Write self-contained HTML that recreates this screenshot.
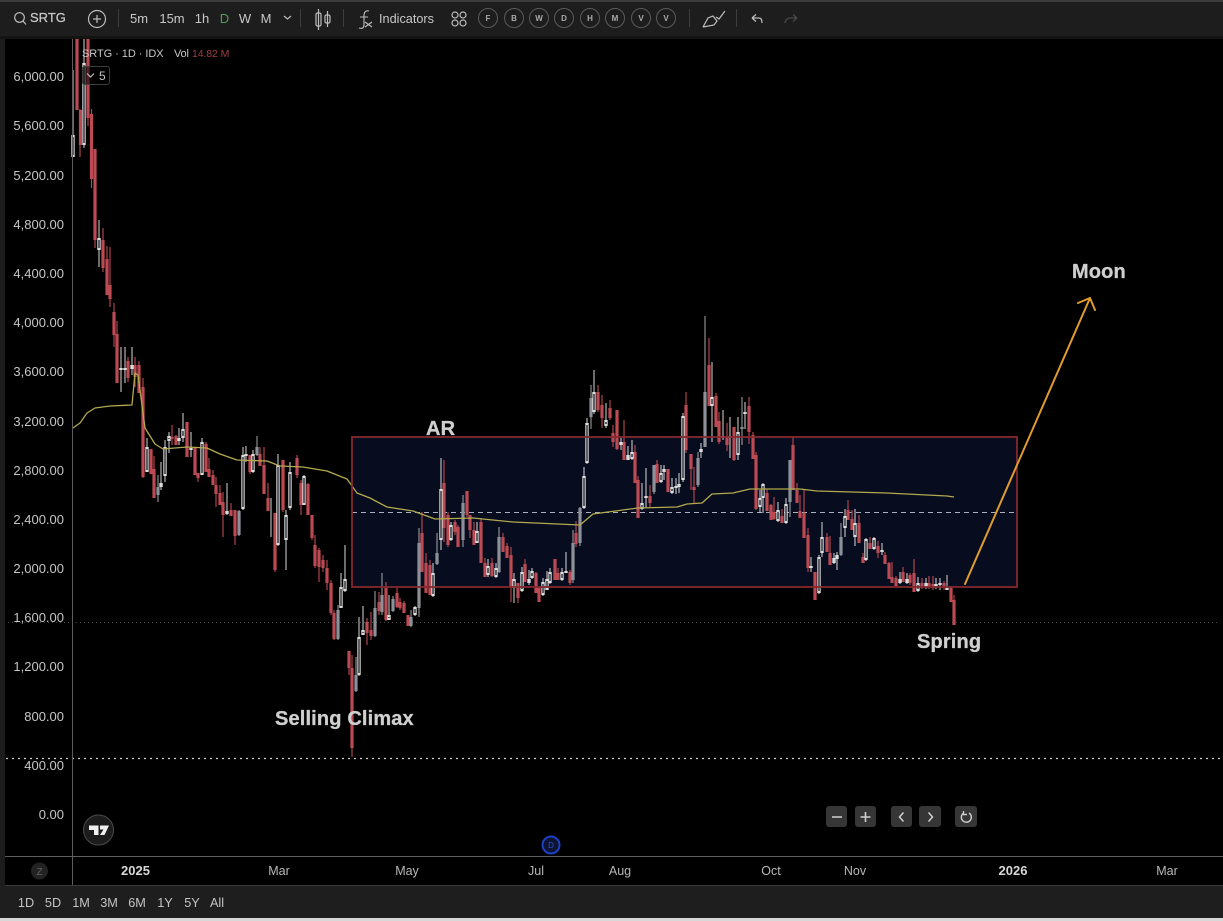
<!DOCTYPE html>
<html><head><meta charset="utf-8"><style>
html,body{margin:0;padding:0;background:#000;width:1223px;height:921px;overflow:hidden}
svg{display:block;font-family:"Liberation Sans",sans-serif}
.y text{font-size:13px;fill:#c6c6c6;text-anchor:end}
.t text{font-size:12.5px;fill:#b8b8b8;text-anchor:middle}
.tb text{font-size:13px;fill:#c8c8c8;text-anchor:middle}
.r text{font-size:12.7px;fill:#c4c4c4;text-anchor:middle}
.c circle{fill:none;stroke:#5a5a5a}
.c text{font-size:8px;font-weight:bold;fill:#aaa;text-anchor:middle}
.a{font-size:20px;font-weight:bold;fill:#cfcfcf;stroke:#cfcfcf;stroke-width:.3;letter-spacing:.15px}
.ic{fill:none;stroke:#bdbdbd;stroke-width:1.2}
</style></head><body>
<svg width="1223" height="921" viewBox="0 0 1223 921" xmlns="http://www.w3.org/2000/svg">
<rect width="1223" height="921" fill="#000"/>
<rect x="352" y="437" width="665" height="150" fill="#070d1f"/>
<path d="M0 622.5H1218" stroke="#444" stroke-dasharray="1 3" fill="none"/>
<path d="M352 512.5H1017" stroke="#aab0bc" stroke-width="1.1" stroke-dasharray="5 4" fill="none"/>

<!-- red wicks -->
<path fill="none" stroke="#bd4a52" stroke-width="1.1" d="M80 109V157M88 39V126M91.500 109V188M95 149V248M103 228V272M107 246V295M110 247V307M114 303V347M117 321V383M128 357V382M135 357V387M139 361V393M143 378V478M154 456V498M172 425V445M176 435V445M198 473V482M206 442V472M209 458V477M213 470V485M216 477V507M220 485V505M223 492V537M231 503V516M235 510V545M250 455V474M260 447V466M264 447V494M268 483V511M275 513V572M283 460V512M297 455V478M301 480V515M308 483V515M312 515V540M315 535V568M319 548V582M323 555V572M327 560V590M331 580V615M334 610V640M349 651V675M352 655V757M367 618V645M371 612V640M379 592V615M386 582V621M397 588V608M400 598V610M404 601V613M422 512V572M426 553V593M430 560V595M444 460V542M448 512V547M455 520V535M458 525V547M467 491V517M470 515V538M474 522V545M481 518V563M485 558V577M492 558V577M503 533V552M507 543V558M511 547V602M518 583V603M525 559V582M536 572V593M539 587V602M555 559V580M558 568V580M570 570V585M576 521V547M598 385V412M602 395V428M610 400V420M613 425V447M617 410V450M624 420V460M635 445V483M638 476V518M650 485V508M657 460V483M668 469V492M686 392V453M691 454V490M694 467V503M709 338V406M716 393V427M719 412V444M727 423V451M734 427V461M749 397V444M753 432V459M756 452V510M767 489V511M771 504V520M774 497V520M782 509V523M793 437V490M797 483V503M800 495V518M804 490V538M808 528V572M815 572V600M827 533V552M830 536V565M848 500V520M852 510V530M859 515V543M863 553V563M870 537V549M878 541V558M885 552V564M889 562V579M892 562V583M896 576V586M903 567V582M910 573V585M914 559V592M922 578V589M929 576V589M933 576V590M944 581V590M951 586V602M954 595V625"/>
<!-- red bodies -->
<path fill="none" stroke="#bb4a52" stroke-width="3.2" d="M77 39V110M80.500 110V145M88 39V118M91.500 114V179M95 149V240M103 240V268M107 259V295M110 285V299M114 312V335M117 334V383M128 361V378M135 365V377M139 365V393M143 387V477M151 449V474M154 469V498M172 437V439M176 436V445M187 422V457M195 447V475M198 473V478M206 444V472M209 469V477M213 475V485M216 485V494M220 493V505M223 502V515M231 510V516M235 510V536M250 455V472M260 454V466M264 465V494M268 498V511M275 513V570M283 460V510M297 458V475M301 483V505M308 484V515M312 515V538M315 545V566M319 550V567M323 560V568M327 568V583M331 583V613M334 613V639M349 651V668M352 668V748M367 622V633M371 630V636M379 602V611M386 587V620M397 593V607M400 602V608M404 603V613M408 615V626M422 533V572M426 563V593M430 565V595M444 483V528M448 515V545M455 522V532M458 527V547M467 491V515M470 515V530M474 530V545M481 522V563M485 563V577M492 563V576M503 537V552M507 546V558M511 555V587M518 583V598M525 564V582M536 573V593M539 588V602M555 559V580M558 573V580M570 572V583M576 533V544M598 392V410M602 405V418M610 408V418M613 433V442M617 410V449M624 442V460M635 452V483M638 480V518M650 496V503M657 464V483M668 469V492M686 405V450M691 454V469M694 487V490M709 365V406M716 396V427M719 421V442M727 437V445M734 427V460M749 406V432M753 435V459M756 455V509M767 493V511M771 505V520M774 512V519M782 516V523M793 445V490M797 490V503M800 511V518M804 513V538M808 535V568M815 572V600M827 537V552M830 553V565M848 510V520M852 519V530M859 523V543M863 557V563M870 543V549M878 546V553M885 555V564M889 563V579M892 577V583M896 578V586M903 572V582M910 575V583M914 573V592M922 583V587M929 583V587M933 584V587M944 583V588M951 587V602M954 600V625"/>
<path fill="none" stroke="#a8a8a8" stroke-width="1" d="M158 475V502M239 510V536M257 436V456M338 605V640M356 657V692M375 591V637M393 596V612M411 610V627M419 528V617M437 533V565M463 495V547M499 527V573M573 530V583M580 507V546M591 385V429M654 465V494M698 452V487M705 316V447M742 397V445M790 460V517M841 523V556M382 573V615"/>
<path fill="none" stroke="#8d9098" stroke-width="3.2" d="M158 487V495M239 511V535M257 447V455M338 610V639M356 675V691M375 608V636M393 599V611M411 617V626M419 543V608M437 553V564M463 503V540M499 537V572M573 543V580M580 508V543M591 398V417M654 465V492M698 458V485M705 392V447M742 427V429M790 460V502M841 537V555M382 595V612"/>
<!-- white wicks -->
<path fill="none" stroke="#d8d8d8" stroke-width="1" d="M73 70V157M84 39V148M99 220V267M121 347V392M125 347V383M132 347V375M147 438V472M161 462V490M165 440V482M169 432V453M179 428V445M183 413V442M191 432V457M202 438V475M227 483V515M243 447V510M246 446V462M253 450V473M271 498V537M278 454V546M286 510V570M290 462V510M304 475V505M341 573V608M345 545V592M359 617V676M363 606V635M389 595V620M415 606V616M433 563V597M441 458V550M451 522V541M477 522V543M488 559V577M496 563V578M514 573V603M522 567V592M529 570V585M532 568V579M543 578V596M547 571V590M550 568V584M562 568V581M566 552V573M584 467V509M587 418V464M594 370V414M606 403V428M621 438V450M628 446V460M632 440V460M642 483V510M646 468V508M661 465V483M664 465V480M672 478V494M676 478V494M679 473V493M683 413V482M701 443V458M712 362V442M723 410V440M730 417V458M738 417V460M745 402V429M760 490V513M763 483V513M778 502V522M786 498V524M811 557V572M819 555V594M822 522V557M834 553V564M837 552V570M845 509V537M855 509V546M866 538V561M874 537V550M882 543V555M900 572V584M907 573V584M918 577V592M926 578V589M936 578V589M940 578V590M947 575V590"/>
<!-- white bodies: outer then inner -->
<path fill="none" stroke="#dcdcdc" stroke-width="3.4" d="M73 135V157M84 63V145M99 238V250M121 368V370M125 368V370M132 365V369M147 447V472M161 483V487M165 447V476M169 436V441M179 438V441M183 429V438M191 448V450M202 442V475M227 511V514M243 455V509M246 454V456M253 454V472M278 465V545M286 515V540M290 472V508M304 476V505M341 587V608M345 579V591M359 637V675M363 630V635M389 615V620M415 607V615M433 573V596M441 489V540M451 525V540M477 531V543M488 566V575M496 568V577M514 579V588M522 572V591M529 579V583M532 571V578M543 582V595M547 579V590M550 572V583M562 572V580M566 571V573M584 476V508M587 423V463M594 392V412M606 420V426M621 442V445M628 455V460M632 452V459M642 503V509M646 496V498M661 473V482M664 469V472M672 487V493M676 486V488M679 484V487M683 416V480M701 449V452M712 397V406M723 436V438M730 436V438M738 432V455M745 412V414M760 498V507M763 484V498M778 510V521M786 504V523M811 566V568M819 557V593M822 537V553M834 558V563M837 555V559M845 516V528M855 523V537M866 539V560M874 538V549M882 550V552M900 579V583M907 579V583M918 583V591M926 583V587M936 584V586M940 583V585M947 588V590"/>
<path fill="none" stroke="#2a2c32" stroke-width="1.4" d="M73 137V155M84 65V143M99 240V248M147 449V470M165 449V474M169 438V439M183 431V436M202 444V473M243 457V507M253 456V470M278 467V543M286 517V538M290 474V506M304 478V503M341 589V606M345 581V589M359 639V673M363 632V633M389 617V618M415 609V613M433 575V594M441 491V538M451 527V538M477 533V541M488 568V573M496 570V575M514 581V586M522 574V589M532 573V576M543 584V593M547 581V588M550 574V581M562 574V578M584 478V506M587 425V461M594 394V410M606 422V424M632 454V457M642 505V507M661 475V480M672 489V491M683 418V478M712 399V404M738 434V453M760 500V505M763 486V496M778 512V519M786 506V521M819 559V591M822 539V551M845 518V526M855 525V535M866 541V558M874 540V547M918 585V589"/>

<path fill="none" stroke="#b3a94e" stroke-width="1.3" stroke-linejoin="round" d="M73 428L80 423L87 413L95 408L110 406L132 405L135 373L138 375L145 428L155 444L163 449L187 447L207 448L220 454L237 460L267 461L280 466L303 467L327 471L347 479L357 493L370 498L387 507L413 511L435 519L473 518L513 522L580 525L593 514L638 508L677 507L687 504L702 503L712 494L733 493L750 489L800 489L817 491L887 493L947 496L954 497"/>
<rect x="352" y="437" width="665" height="150" fill="none" stroke="#84292f" stroke-width="1.8"/>

<path fill="none" stroke="#e09c2c" stroke-width="2" stroke-linecap="round" stroke-linejoin="round" d="M965 584L1090 298M1078 303L1090 298L1095 310"/>

<text class="a" x="1072" y="278">Moon</text>
<text class="a" x="426" y="435">AR</text>
<text class="a" x="917" y="648">Spring</text>
<text class="a" x="275" y="725">Selling Climax</text>

<path d="M0 758.5H1223" stroke="#d0d0d0" stroke-width="1.3" stroke-dasharray="2 4" fill="none"/>
<g class="y">
<text x="64" y="81">6,000.00</text><text x="64" y="130">5,600.00</text><text x="64" y="180">5,200.00</text><text x="64" y="229">4,800.00</text><text x="64" y="278">4,400.00</text><text x="64" y="327">4,000.00</text><text x="64" y="376">3,600.00</text><text x="64" y="426">3,200.00</text><text x="64" y="475">2,800.00</text><text x="64" y="524">2,400.00</text><text x="64" y="573">2,000.00</text><text x="64" y="622">1,600.00</text><text x="64" y="671">1,200.00</text><text x="64" y="721">800.00</text><text x="64" y="770">400.00</text><text x="64" y="819">0.00</text>
</g>
<path d="M72.500 38V885" stroke="#5e5e5e" fill="none"/>
<path d="M5 856.500H1223" stroke="#5e5e5e" fill="none"/>

<!-- legend -->
<text x="82" y="57" font-size="11" letter-spacing="-.05" fill="#c8c8c8">SRTG · 1D · IDX</text>
<text x="174" y="57" font-size="11" letter-spacing="-.2" fill="#c8c8c8">Vol</text>
<text x="192" y="57" font-size="10.5" letter-spacing="-.1" fill="#9c3f44">14.82 M</text>
<rect x="82.500" y="66.500" width="27" height="18" rx="2.500" fill="#000" fill-opacity=".55" stroke="#3f3f3f"/>
<path d="M87 73.500L90.500 77L94 73.500" class="ic"/>
<text x="99" y="80" font-size="12" fill="#c4c4c4">5</text>

<!-- logo -->
<circle cx="98.500" cy="830" r="15" fill="#1c1c1c" stroke="#4a4a4a"/>
<path d="M89 825.500H98.500V835H94V830H89ZM100 825.500H109L104.500 835H100L103.500 829.500H100Z" fill="#f0f0f0"/>

<!-- dividend mark -->
<circle cx="551" cy="845" r="8.500" fill="#0c1432" stroke="#1d3fc4" stroke-width="2"/>
<text x="551" y="848" font-size="8" text-anchor="middle" fill="#2d52c8">D</text>

<!-- chart nav buttons -->
<g fill="#363636"><rect x="826" y="806" width="21" height="21" rx="3"/><rect x="855" y="806" width="21" height="21" rx="3"/><rect x="891" y="806" width="21" height="21" rx="3"/><rect x="919" y="806" width="22" height="21" rx="3"/><rect x="955" y="806" width="22" height="21" rx="3"/></g>
<path d="M832 817H842M860.500 817H870.500M865.500 812V822" stroke="#cfcfcf" stroke-width="1.6" fill="none"/>
<path d="M903.500 812.500L899.500 817L903.500 821.500M928.500 812.500L932.500 817L928.500 821.500" stroke="#cfcfcf" stroke-width="1.5" fill="none"/>
<path d="M963 813.500A5 5 0 1 0 969 813M963.500 811V814.500H967" stroke="#cfcfcf" stroke-width="1.4" fill="none"/>

<!-- z + time axis -->
<circle cx="39.500" cy="871" r="8.500" fill="#222"/>
<text x="39.500" y="875" font-size="10" text-anchor="middle" fill="#606060">Z</text>
<g class="t">
<text x="135.500" y="875" style="font-weight:bold;font-size:13px;fill:#d8d8d8">2025</text><text x="279" y="875">Mar</text><text x="407" y="875">May</text><text x="536" y="875">Jul</text><text x="620" y="875">Aug</text><text x="771" y="875">Oct</text><text x="855" y="875">Nov</text><text x="1013" y="875" style="font-weight:bold;font-size:13px;fill:#d8d8d8">2026</text><text x="1167" y="875">Mar</text>
</g>

<!-- bottom bar -->
<rect x="0" y="885" width="1223" height="33" fill="#1e1e1e"/>
<rect x="0" y="918" width="1223" height="3" fill="#d8d8d8"/>
<path d="M5 885.500H1223" stroke="#3a3a3a" fill="none"/>
<g class="r"><text x="26" y="907">1D</text><text x="53" y="907">5D</text><text x="81" y="907">1M</text><text x="109" y="907">3M</text><text x="137" y="907">6M</text><text x="165" y="907">1Y</text><text x="192" y="907">5Y</text><text x="217" y="907">All</text></g>

<!-- left edge -->
<rect x="0" y="37" width="5" height="848" fill="#1c1c1c"/>
<rect x="0" y="885" width="5" height="33" fill="#1e1e1e"/>

<!-- toolbar -->
<rect x="0" y="0" width="1223" height="36" fill="#1d1d1d"/>
<rect x="0" y="0" width="1223" height="2" fill="#3c3c3c"/>
<rect x="0" y="36" width="1223" height="3" fill="#141414"/>
<circle cx="19.500" cy="17.500" r="4.800" class="ic"/><path d="M23 21L26 24.500" class="ic"/>
<text x="30" y="22" font-size="13" fill="#c8c8c8" stroke="#c8c8c8" stroke-width=".25">SRTG</text>
<circle cx="97" cy="19" r="8.500" class="ic"/><path d="M97 15V23M93 19H101" class="ic"/>
<path d="M118.500 9V27M300.500 9V27M343.500 9V27M689.500 9V27M736.500 9V27" stroke="#3e3e3e" fill="none"/>
<g class="tb"><text x="139" y="23">5m</text><text x="172" y="23">15m</text><text x="202" y="23">1h</text><text x="224.500" y="23" style="fill:#4c9a5c">D</text><text x="245" y="23">W</text><text x="266" y="23">M</text></g>
<path d="M284 16L287.500 19L291 16" class="ic"/>
<path d="M318.500 9V30M327.500 11V27" class="ic" stroke-width="1"/>
<rect x="316" y="13" width="5" height="13" rx="1.500" fill="#1d1d1d" class="ic"/>
<rect x="325" y="15" width="5" height="8" rx="1.500" fill="#1d1d1d" class="ic"/>
<path d="M369 11C365 10 364 13 364 16V25C364 28 362 29 359 28M360 17H368M365 22L372 27M372 22L365 27" stroke="#bdbdbd" fill="none" stroke-width="1.100"/>
<text x="379" y="23" font-size="12.7" fill="#c8c8c8">Indicators</text>
<rect x="452" y="12" width="6" height="6" rx="3" class="ic"/><rect x="460" y="12" width="6" height="6" rx="3" class="ic"/><rect x="452" y="20" width="6" height="6" rx="3" class="ic"/><rect x="460" y="20" width="6" height="6" rx="3" class="ic"/>
<g class="c">
<circle cx="488" cy="18" r="9.500"/><text x="488" y="21">F</text>
<circle cx="514" cy="18" r="9.500"/><text x="514" y="21">B</text>
<circle cx="539" cy="18" r="9.500"/><text x="539" y="21">W</text>
<circle cx="564" cy="18" r="9.500"/><text x="564" y="21">D</text>
<circle cx="590" cy="18" r="9.500"/><text x="590" y="21">H</text>
<circle cx="615" cy="18" r="9.500"/><text x="615" y="21">M</text>
<circle cx="641" cy="18" r="9.500"/><text x="641" y="21">V</text>
<circle cx="666" cy="18" r="9.500"/><text x="666" y="21">V</text>
</g>
<path d="M703 27L708 18L713 16L717 21L714 25L703 27M716 17L719 19L725 11" stroke="#bdbdbd" fill="none" stroke-width="1.200"/>
<path d="M752 18H759C761 18 762 20 762 23M752 18L756 14.500M752 18L756 21.500" stroke="#bdbdbd" fill="none" stroke-width="1.200"/>
<path d="M797 18H790C788 18 785 20 785 23M797 18L793 14.500M797 18L793 21.500" stroke="#4a4a4a" fill="none" stroke-width="1.200"/>
</svg>
</body></html>
